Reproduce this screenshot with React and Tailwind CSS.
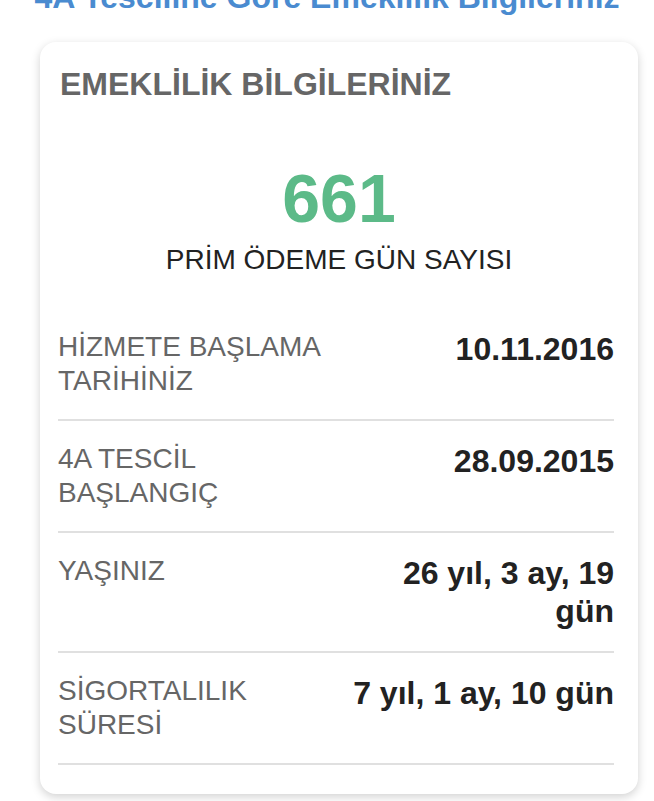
import React from "react";

const rows = [
  { label: "HİZMETE BAŞLAMA TARİHİNİZ", value: "10.11.2016" },
  { label: "4A TESCİL BAŞLANGIÇ", value: "28.09.2015" },
  { label: "YAŞINIZ", value: "26 yıl, 3 ay, 19 gün" },
  { label: "SİGORTALILIK SÜRESİ", value: "7 yıl, 1 ay, 10 gün" },
];

export default function App() {
  return (
    <div className="min-h-screen bg-white overflow-hidden font-['Liberation_Sans',Arial,sans-serif]">
      <h2 className="-mt-[22px] text-center text-[32px] leading-[38px] font-bold text-[#4a8bd0]">
        4A Tesciline Göre Emeklilik Bilgileriniz
      </h2>

      {/* Card */}
      <div className="ml-10 mr-4 mt-[26px] rounded-2xl bg-white px-5 pt-[23px] pb-[29px] shadow-[0_3px_10px_rgba(0,0,0,0.18)]">
        <h3 className="text-[32px] leading-[38px] font-bold text-[#666]">
          EMEKLİLİK BİLGİLERİNİZ
        </h3>

        <div className="mt-[60px] text-center">
          <div className="text-[68px] leading-[70px] font-bold text-[#5cba88]">661</div>
          <div className="mt-[10px] text-[28px] leading-[34px] text-[#222]">
            PRİM ÖDEME GÜN SAYISI
          </div>
        </div>

        <div className="mt-[32px] -ml-[2px] mr-1">
          {rows.map((row) => (
            <div
              key={row.label}
              className="flex justify-between border-b-2 border-[#e0e0e0] py-[21px]"
            >
              <div className="w-1/2 pr-2 text-[28px] leading-[34px] text-[#666]">
                {row.label}
              </div>
              <div className="w-1/2 text-right text-[32px] leading-[38px] font-bold text-[#222]">
                {row.value}
              </div>
            </div>
          ))}
        </div>
      </div>
    </div>
  );
}
